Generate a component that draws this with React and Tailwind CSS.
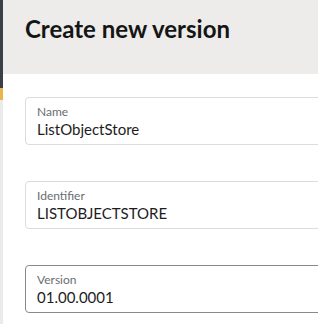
export default function App() {
  const Field = ({ label, value, active }) => (
    <div
      className={`h-[48px] rounded-[4px] border ${active ? "border-[#8a8a8a]" : "border-[#dcdcdc]"} bg-white pl-[11px] flex flex-col justify-center`}
    >
      <div className="text-[12px] leading-[15px] text-[#6a6d70]">{label}</div>
      <div className="text-[15px] leading-[20px] text-[#1d1d1d]">{value}</div>
    </div>
  );
  return (
    <div className="w-[318px] h-[324px] flex bg-white overflow-hidden" style={{ fontFamily: 'Lato, "Noto Sans", sans-serif' }}>
      <div className="w-[3px] flex flex-col shrink-0">
        <div className="h-[88px] bg-[#3b4048]" />
        <div className="h-[12px] bg-[#e8b54a]" />
        <div className="flex-1 bg-[#ebebeb]" />
      </div>
      <div className="flex-1 flex flex-col">
        <div className="h-[74px] bg-[#edecea] pl-[22px] pt-[13px]">
          <h1 className="text-[24px] leading-[32px] font-bold text-[#151515]">Create new version</h1>
        </div>
        <div className="flex flex-col gap-[36px] pt-[23px] pl-[22px] -mr-[10px]">
          <Field label="Name" value="ListObjectStore" />
          <Field label="Identifier" value="LISTOBJECTSTORE" />
          <Field label="Version" value="01.00.0001" active />
        </div>
      </div>
    </div>
  );
}
